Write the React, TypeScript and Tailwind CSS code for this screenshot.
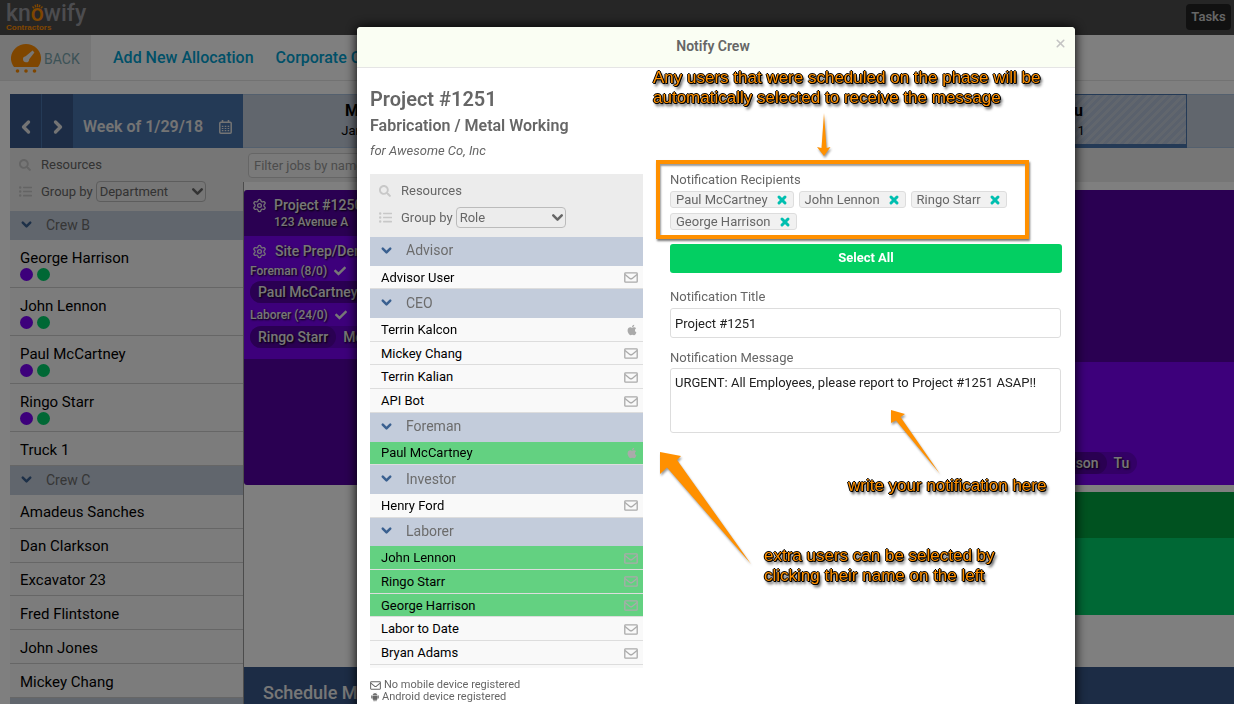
import React from "react";
import { AiFillAndroid } from "react-icons/ai";
import { FaApple, FaCheck, FaListUl, FaSearch } from "react-icons/fa";
import { ChevronDown, ChevronLeft, ChevronRight, Settings, X } from "lucide-react";
import clsx from "clsx";

type Person = { name: string; device?: "apple"; selected?: boolean };
type Group = { title: string; people: Person[] };

const roles: Group[] = [
  { title: "Advisor", people: [{ name: "Advisor User" }] },
  {
    title: "CEO",
    people: [
      { name: "Terrin Kalcon", device: "apple" },
      { name: "Mickey Chang" },
      { name: "Terrin Kalian" },
      { name: "API Bot" },
    ],
  },
  { title: "Foreman", people: [{ name: "Paul McCartney", device: "apple", selected: true }] },
  { title: "Investor", people: [{ name: "Henry Ford" }] },
  {
    title: "Laborer",
    people: [
      { name: "John Lennon", selected: true },
      { name: "Ringo Starr", selected: true },
      { name: "George Harrison", selected: true },
      { name: "Labor to Date" },
      { name: "Bryan Adams" },
    ],
  },
];

const crewB = ["George Harrison", "John Lennon", "Paul McCartney", "Ringo Starr"];
const crewC = [
  "Amadeus Sanches",
  "Dan Clarkson",
  "Excavator 23",
  "Fred Flintstone",
  "John Jones",
  "Mickey Chang",
];
const recipients = ["Paul McCartney", "John Lennon", "Ringo Starr", "George Harrison"];
const days = [
  { day: "Mon", date: "Jan 29" },
  { day: "Tue", date: "Jan 30" },
  { day: "Wed", date: "Jan 31" },
  { day: "Thu", date: "Feb 1", today: true },
  { day: "Fri", date: "Feb 2" },
];

const Envelope = ({ className }: { className?: string }) => (
  <svg viewBox="0 0 14 11" className={className} fill="none" stroke="currentColor" strokeWidth="1.3">
    <rect x="0.8" y="0.8" width="12.4" height="9.4" rx="0.8" />
    <path d="M1 2.6 L5.8 6.4 Q7 7.2 8.2 6.4 L13 2.6" />
  </svg>
);

const Calendar = () => (
  <svg viewBox="0 0 13 14" className="h-[14px] w-[13px]" fill="none" stroke="currentColor">
    <rect x="0.8" y="2.3" width="11.4" height="10.9" rx="1" strokeWidth="1.5" />
    <path d="M3.5 0v3M9.5 0v3" strokeWidth="1.6" />
    <path d="M2.8 6.3h7.4M2.8 8.5h7.4M2.8 10.7h7.4" strokeWidth="1.2" strokeDasharray="1.6 1.3" />
  </svg>
);

const Logo = () => (
  <div className="flex flex-col pt-[2px] text-[#99999f]">
    <div className="flex items-end text-[23px] leading-[24px] font-medium">
      kn
      <span className="relative text-[#ff8c00]">
        o
        <svg viewBox="0 0 14 6" className="absolute top-[2px] left-0 h-[5px] w-[13px]" stroke="#ff8c00" strokeWidth="1.6">
          <path d="M1 3 L3 5 M4 1 L5 4 M7 0 L7 4 M10 1 L9 4 M13 3 L11 5" />
        </svg>
      </span>
      wify
    </div>
    <span className="-mt-[3px] font-['Liberation_Sans'] text-[8px] leading-[10px] font-bold text-[#ff8c00]">
      Contractors
    </span>
  </div>
);

const Gauge = () => (
  <svg viewBox="0 0 30 30" className="h-[30px] w-[30px]">
    <path d="M3 23 C-5 12 4 0 15 0 C26 0 35 12 27 23 Z" fill="#ff8c00" />
    <path d="M21.6 6.6 L23.4 8.4 L18.2 15.2 A3.1 3.1 0 1 1 14.6 12.2 Z" fill="#eee" />
    <circle cx="6.5" cy="27" r="1.8" fill="#ff8c00" />
    <circle cx="15" cy="27" r="1.8" fill="#ff8c00" />
    <circle cx="23.5" cy="27" r="1.8" fill="#ff8c00" />
  </svg>
);

const ResourceFilter = ({ id, value }: { id: string; value: string }) => (
  <div className="flex h-[63px] shrink-0 flex-col gap-[6px] bg-[#ececec] px-[9px] pt-[6px] text-[13px] text-[#666]">
    <div className="flex h-[21px] items-center gap-[10px]">
      <FaSearch className="size-[12px] text-[#c8c8c8]" />
      Resources
    </div>
    <div className="flex h-[21px] items-center">
      <FaListUl className="mr-[9px] size-[13px] text-[#c8c8c8]" />
      <label htmlFor={id} className="mr-[3px]">
        Group by
      </label>
      <div className="relative flex items-center">
        <select
          id={id}
          className="h-[21px] w-[110px] appearance-none rounded-[4px] border border-[#bbb] bg-transparent pl-[3px] text-[13px] leading-[18px]"
        >
          <option>{value}</option>
        </select>
        <ChevronDown className="pointer-events-none absolute right-0 size-[17px]" strokeWidth={3.5} />
      </div>
    </div>
  </div>
);

const GroupTitle = ({ title, className }: { title: string; className?: string }) => (
  <button
    className={clsx(
      "flex w-full items-center gap-[12px] bg-[#c3ccdb] px-[9px] pb-[2px] text-sm text-[#6c6c6c]",
      className
    )}
  >
    <ChevronDown className="size-[15px] text-[#3a6090]" strokeWidth={4} />
    {title}
  </button>
);

const Sidebar = () => (
  <aside className="flex w-[233px] shrink-0 flex-col text-black">
    <div className="flex h-[54px] shrink-0 text-[#e8e8e8]">
      <button aria-label="Previous week" className="flex w-[31px] items-center justify-center bg-[#38598a] pt-[12px]">
        <ChevronLeft className="size-[20px]" strokeWidth={4} />
      </button>
      <button
        aria-label="Next week"
        className="flex w-[32px] items-center justify-center border-l border-[#4874ac] bg-[#38598a] pt-[12px]"
      >
        <ChevronRight className="size-[20px]" strokeWidth={4} />
      </button>
      <div className="flex grow items-center justify-between bg-[#4874ac] pt-[12px] pr-[11px] pl-[10px] text-base font-semibold">
        Week of 1/29/18
        <Calendar />
      </div>
    </div>
    <ResourceFilter id="crew-group" value="Department" />
    <GroupTitle title="Crew B" className="h-[29px] shrink-0" />
    {crewB.map((name) => (
      <div
        key={name}
        className="flex h-[48px] shrink-0 flex-col justify-center gap-px border-b border-[#ccc] bg-[#f9f9f9] px-[10px] pt-[2px] text-[15px] leading-[18px]"
      >
        {name}
        <div className="flex gap-[4px]">
          <span className="size-[13px] rounded-full bg-[#7a00f6]" />
          <span className="size-[13px] rounded-full bg-[#00d06a]" />
        </div>
      </div>
    ))}
    <div className="flex h-[34px] shrink-0 items-center border-b border-[#ccc] bg-[#f9f9f9] px-[10px] pt-[3px] text-[15px]">
      Truck 1
    </div>
    <GroupTitle title="Crew C" className="h-[29px] shrink-0" />
    <div className="flex h-[203px] shrink-0 flex-col">
      {crewC.map((name) => (
        <div
          key={name}
          className="flex flex-1 items-center border-b border-[#ccc] bg-[#f9f9f9] px-[10px] pt-[2px] text-[15px] leading-[18px]"
        >
          {name}
        </div>
      ))}
    </div>
    <GroupTitle title="Crew D" className="h-[29px] shrink-0" />
  </aside>
);

const Pill = ({ name, days: dayLabel }: { name: string; days?: string }) => (
  <div className="flex h-[22px] w-fit items-center rounded-full bg-[#6600cc] pr-[8px] text-sm">
    <span className="flex h-[22px] items-center rounded-full bg-[#5400a4] px-[8px]">{name}</span>
    {dayLabel && <span className="ml-[7px]">{dayLabel}</span>}
  </div>
);

const Board = () => (
  <main className="flex min-w-0 grow flex-col">
    <div className="flex h-[54px] shrink-0 overflow-hidden">
      {days.map(({ day, date, today }) => (
        <div
          key={day}
          className={clsx(
            "flex w-[236px] shrink-0 flex-col items-center justify-center bg-[#c3ccdb] text-sm text-black",
            today
              ? "border border-b-4 border-[#4874ac] bg-[repeating-linear-gradient(135deg,#c3ccdb_0_3px,#b4c3d8_3px_6px)] pt-[3px]"
              : "border-y border-[#a9c0dc]"
          )}
        >
          <span className="text-base leading-[20px] font-bold">{day}</span>
          <span className="text-[13px] leading-[20px]">{date}</span>
        </div>
      ))}
    </div>
    <div className="h-[34px] shrink-0 bg-[#ececec] p-[5px]">
      <input
        aria-label="Filter jobs"
        placeholder="Filter jobs by name"
        className="h-[25px] w-[220px] rounded-[4px] border border-[#ccc] bg-[#f5f5f5] px-[5px] text-[13px] placeholder:text-[#999]"
      />
    </div>
    <div className="flex grow flex-col border-l border-[#999] pt-[8px]">
      <section className="flex h-[295px] shrink-0 flex-col rounded-l-[3px] bg-[#5400a4] font-medium text-[#eee] [text-shadow:1px_1px_2px_#000]">
        <div className="grid h-[46px] shrink-0 grid-cols-[30px_1fr] content-center items-center pr-[2px] text-sm leading-[18px]">
          <Settings className="mx-auto size-[15px]" />
          <h2>Project #1250</h2>
          <p className="col-start-2 text-xs">123 Avenue A</p>
        </div>
        <div className="flex grow">
          <div className="h-[123px] w-[472px] bg-[#7a00f6] px-[6px] pt-[5px]">
            <div className="flex h-[20px] items-center text-sm">
              <Settings className="mr-[8px] ml-[2px] size-[15px]" />
              Site Prep/Demo
            </div>
            <div className="flex h-[20px] items-center gap-[7px] text-xs">
              Foreman (8/0) <FaCheck className="size-[12px]" />
            </div>
            <Pill name="Paul McCartney" days="Mo" />
            <div className="flex h-[23px] items-center gap-[7px] text-xs">
              Laborer (24/0) <FaCheck className="size-[12px]" />
            </div>
            <Pill name="Ringo Starr" days="Mo" />
          </div>
          <div className="mt-auto flex h-[123px] grow flex-col items-start bg-[#7a00f6] pt-[90px] pl-[272px]">
            <Pill name="George Harrison" days="Tu" />
          </div>
        </div>
      </section>
      <section className="mt-[7px] ml-[236px] flex h-[123px] shrink-0 flex-col">
        <div className="h-[46px] bg-[#00a440]" />
        <div className="grow bg-[#00d06a]" />
      </section>
      <div className="mt-[52px] h-[50px] shrink-0 bg-[#38588a] px-[19px] pt-[13px] text-lg leading-[26px] font-medium text-[#eee]">
        Schedule Messages
      </div>
    </div>
  </main>
);

const DeviceIcon = ({ device }: { device?: "apple" }) =>
  device === "apple" ? (
    <FaApple className="size-[12px] text-[#aaa]" />
  ) : (
    <Envelope className="h-[11px] w-[14px] text-[#aaa]" />
  );

const callout =
  "absolute font-['Liberation_Sans'] text-[17px] leading-[20px] whitespace-nowrap text-[#ff9000] [text-shadow:1px_0_#000,-1px_0_#000,0_1px_#000,0_-1px_#000,1px_1px_#000,2px_3px_3px_#000]";

const Arrow = ({ d, className }: { d: string; className: string }) => (
  <svg className={clsx("pointer-events-none absolute drop-shadow-[1px_2px_1px_#0006]", className)} fill="#ff9000">
    <path d={d} />
  </svg>
);

const NotifyModal = () => (
  <div
    role="dialog"
    aria-label="Notify Crew"
    className="relative flex min-h-screen flex-col rounded-t-[4px] bg-white text-[13px] text-[#666] shadow-[0_0_12px_#000]"
  >
    <header className="relative flex h-[41px] items-center justify-center rounded-t-[4px] border-b border-[#e5e5e5] bg-[#fafef3] pr-[6px] pb-[2px]">
      <h1 className="text-sm font-semibold">Notify Crew</h1>
      <button aria-label="Close" className="absolute top-[10px] right-[8px] text-[#c4c4c4]">
        <X className="size-[13px]" strokeWidth={3} />
      </button>
    </header>
    <div className="flex gap-[13px] px-[13px]">
      <div className="flex w-[273px] shrink-0 flex-col">
        <h2 className="mt-[17px] text-xl leading-[28px] font-semibold">Project #1251</h2>
        <h3 className="text-base leading-[26px] font-semibold">Fabrication / Metal Working</h3>
        <p className="mb-[12px] leading-[23px] italic">for Awesome Co, Inc</p>
        <ResourceFilter id="role-group" value="Role" />
        <div className="flex h-[431px] flex-col bg-[#f9f9f9] pb-[3px]">
          {roles.map(({ title, people }) => (
            <React.Fragment key={title}>
              <GroupTitle title={title} className="grow-[27] basis-0" />
              {people.map(({ name, device, selected }) => (
                <button
                  key={name}
                  className={clsx(
                    "flex grow-[22] basis-0 items-center justify-between border-b border-[#ddd] pt-px pr-[5px] pl-[11px] leading-[18px] text-black",
                    selected ? "bg-[#63d181]" : "bg-[#f9f9f9]"
                  )}
                >
                  {name}
                  <DeviceIcon device={device} />
                </button>
              ))}
            </React.Fragment>
          ))}
        </div>
        <ul className="pt-[11px] text-[11px] leading-[12px]">
          <li className="flex items-center gap-[3px]">
            <Envelope className="h-[9px] w-[11px]" /> No mobile device registered
          </li>
          <li className="flex items-center gap-[2px]">
            <AiFillAndroid className="size-[10px]" /> Android device registered
          </li>
          <li className="flex items-center gap-[2px]">
            <FaApple className="size-[10px]" /> iOS device registered
          </li>
        </ul>
      </div>
      <form className="flex min-w-0 grow flex-col pt-[92px]">
        <div className="mr-[33px] h-[79px] border-4 border-[#ff9000] px-[10px] pt-[7px] shadow-[1px_2px_2px_#0008,inset_1px_2px_2px_#0006]">
          <p className="leading-[18px]">Notification Recipients</p>
          <ul className="flex flex-wrap gap-x-[5px] gap-y-[5px] pt-[2px]">
            {recipients.map((name) => (
              <li
                key={name}
                className="flex h-[17px] items-center gap-[8px] rounded-[3px] border border-[#ddd] bg-[#f1f1f1] pr-[5px] pl-[5px] leading-[15px]"
              >
                {name}
                <button type="button" aria-label={"Remove " + name} className="text-[#00bfb0]">
                  <X className="size-[12px]" strokeWidth={6} />
                </button>
              </li>
            ))}
          </ul>
        </div>
        <div className="flex flex-col pl-[14px]">
          <button type="button" className="mt-[5px] h-[29px] rounded-[3px] bg-[#03cf62] pb-px font-bold text-white">
            Select All
          </button>
          <label htmlFor="title" className="mt-[14px] leading-[20px]">
            Notification Title
          </label>
          <input
            id="title"
            defaultValue="Project #1251"
            className="mt-[1px] mr-px h-[30px] rounded-[3px] border border-[#ddd] px-[4px] text-[#222]"
          />
          <label htmlFor="message" className="mt-[10px] leading-[20px]">
            Notification Message
          </label>
          <textarea
            id="message"
            defaultValue="URGENT: All Employees, please report to Project #1251 ASAP!!"
            className="mr-px h-[65px] resize-none rounded-[3px] border border-[#ddd] px-[4px] pt-[5px] leading-[18px] text-[#222]"
          />
        </div>
      </form>
    </div>
    <p className={clsx(callout, "top-[41px] left-[296px]")}>
      Any users that were scheduled on the phase will be
      <br />
      automatically selected to receive the message
    </p>
    <p className={clsx(callout, "top-[449px] left-[491px]")}>write your notification here</p>
    <p className={clsx(callout, "top-[519px] left-[407px]")}>
      extra users can be selected by
      <br />
      clicking their name on the left
    </p>
    <Arrow className="top-[86px] left-[460px] h-[46px] w-[14px]" d="M7 0 L9.5 35 L13.5 34 L7 43 L0 34 L4.5 35Z" />
    <Arrow className="top-[383px] left-[534px] h-[68px] w-[52px]" d="M0 0 L14 4 L9.5 7 L49 64 L5 10.5 L0 13Z" />
    <Arrow className="top-[425px] left-[303px] h-[114px] w-[94px]" d="M0 0 L21 4 L17 8 L91 112 L7 15.5 L0 22Z" />
  </div>
);

export default function App() {
  return (
    <div className="relative flex h-screen flex-col overflow-hidden bg-white font-[Roboto,sans-serif]">
      <nav className="flex h-[35px] shrink-0 items-start justify-between bg-[#4c4c4c] pr-[3px] pl-[6px]">
        <Logo />
        <button className="mt-[4px] h-[26px] w-[45px] rounded-[4px] bg-[#222] text-[13px] font-semibold text-[#ccc]">
          Tasks
        </button>
      </nav>
      <div className="flex h-[46px] shrink-0 items-center border-b border-[#e5e5e5] text-base font-medium">
        <a
          href="#back"
          className="flex h-full w-[91px] items-center gap-[3px] bg-[#ececec] pt-[3px] pl-[11px] text-sm font-normal text-[#7aa5ac]"
        >
          <Gauge />
          BACK
        </a>
        <a href="#allocation" className="ml-[22px] pt-px text-[#00a0d0]">
          Add New Allocation
        </a>
        <a href="#calendar" className="ml-[22px] pt-px text-[#00a0d0]">
          Corporate Calendar
        </a>
      </div>
      <div className="flex grow pt-[13px] pl-[10px]">
        <Sidebar />
        <Board />
      </div>
      <div className="fixed inset-0 grid grid-cols-[1fr] overflow-hidden bg-black/50 pt-[27px] pr-[159px] pl-[357px]">
        <NotifyModal />
      </div>
    </div>
  );
}
